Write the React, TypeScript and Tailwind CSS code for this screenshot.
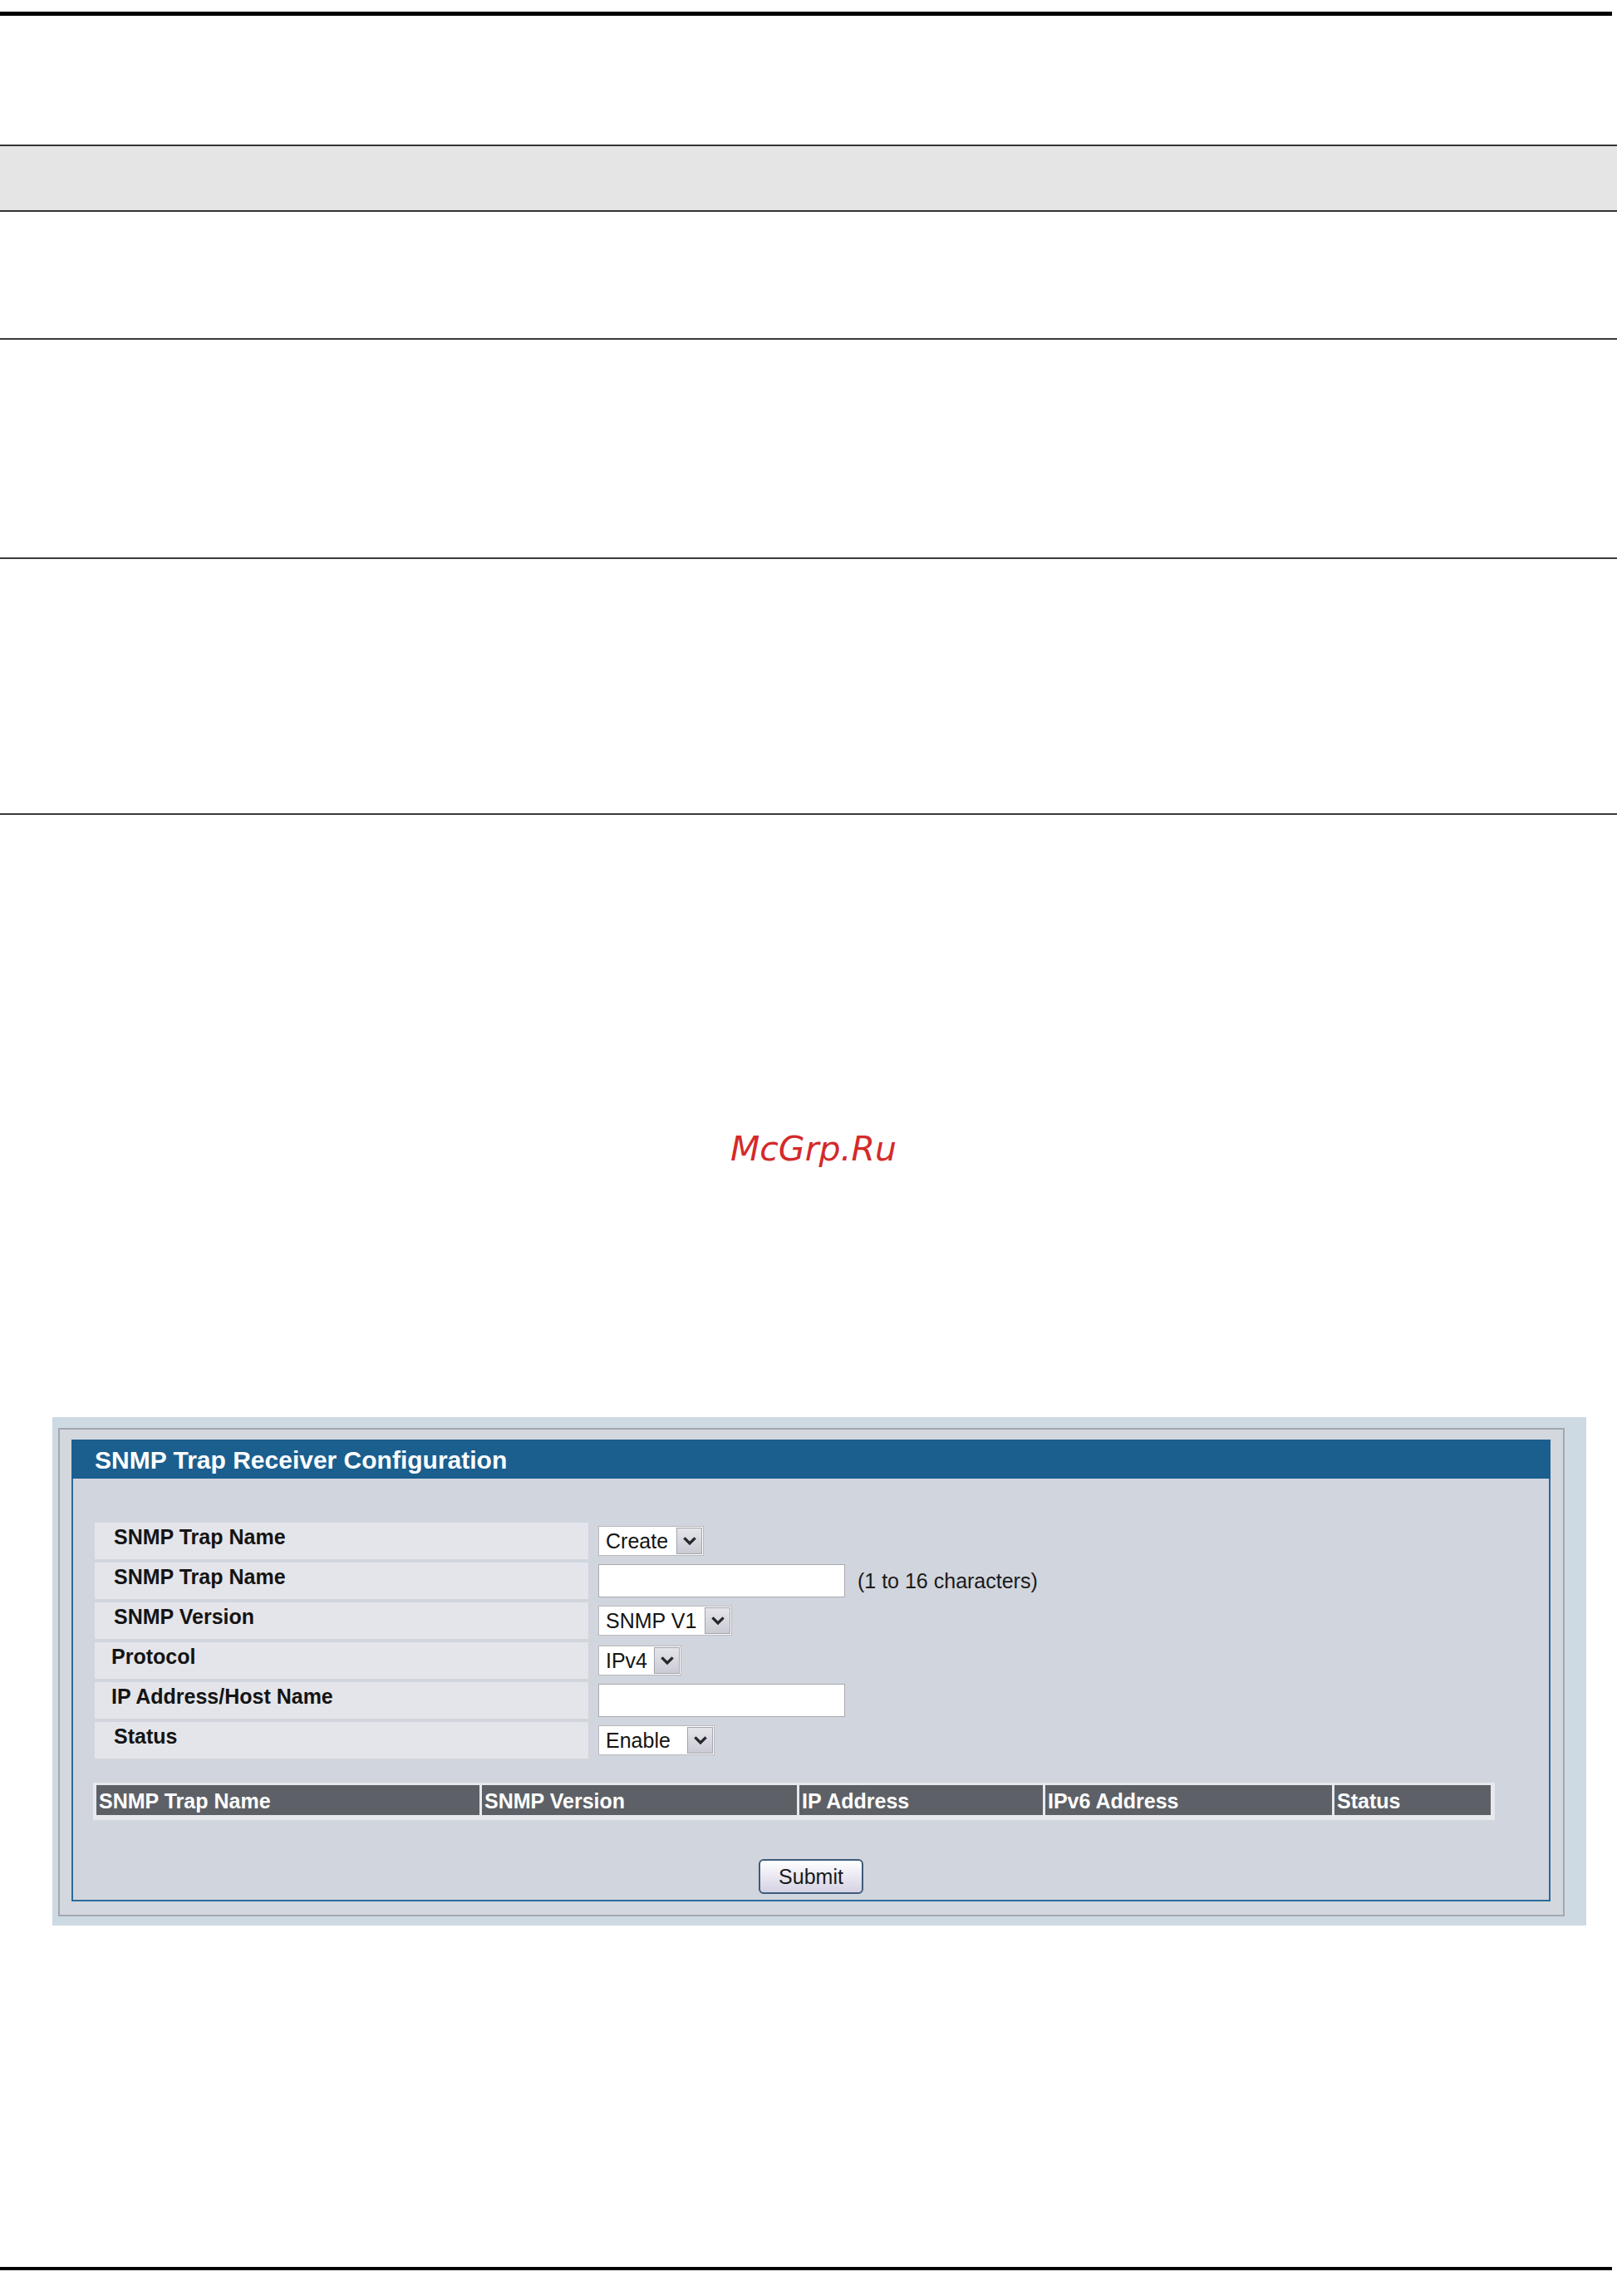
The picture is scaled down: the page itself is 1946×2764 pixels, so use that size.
import React from 'react';

const ARIAL = { fontFamily: '"Liberation Sans", Arial, sans-serif' };

interface SelectProps {
    value: string;
    widthClass: string;
}

const Chevron: React.FC = () => (
    <svg width="16" height="11" viewBox="0 0 16 11" fill="none">
        <path d="M2.5 2.5 L8 8 L13.5 2.5" stroke="#26262c" strokeWidth="3.2" strokeLinecap="square" />
    </svg>
);

const FakeSelect: React.FC<SelectProps> = ({ value, widthClass }) => (
    <div className={`${widthClass} h-[36px] flex bg-white border border-[#b9b9bd]`}>
        <span className="flex-1 pl-[8px] pt-[1px] text-[25px] leading-[33px] text-[#141414] whitespace-nowrap">{value}</span>
        <div className="w-[31px] my-[1px] mr-[1px] flex items-center justify-center bg-linear-to-b from-[#e4e4ea] to-[#cbcbd5] border border-[#a4a4ae]">
            <Chevron />
        </div>
    </div>
);

const TextBox: React.FC = () => <div className="w-[297px] h-[40px] bg-white border border-[#a9a9ad]" />;

interface Row {
    label: string;
    labelPad: string;
    control: React.ReactNode;
}

const ROWS: Row[] = [
    { label: 'SNMP Trap Name', labelPad: 'pl-[23px]', control: <FakeSelect value="Create" widthClass="w-[127px]" /> },
    {
        label: 'SNMP Trap Name',
        labelPad: 'pl-[23px]',
        control: (
            <div className="flex items-center gap-[15px]">
                <TextBox />
                <span className="text-[25px] text-[#1a1a1a]">(1 to 16 characters)</span>
            </div>
        ),
    },
    { label: 'SNMP Version', labelPad: 'pl-[23px]', control: <FakeSelect value="SNMP V1" widthClass="w-[161px]" /> },
    { label: 'Protocol', labelPad: 'pl-[20px]', control: <FakeSelect value="IPv4" widthClass="w-[100px]" /> },
    { label: 'IP Address/Host Name', labelPad: 'pl-[20px]', control: <TextBox /> },
    { label: 'Status', labelPad: 'pl-[23px]', control: <FakeSelect value="Enable" widthClass="w-[140px]" /> },
];

const COLUMNS = [
    { title: 'SNMP Trap Name', w: 'w-[461px]' },
    { title: 'SNMP Version', w: 'w-[379px]' },
    { title: 'IP Address', w: 'w-[293px]' },
    { title: 'IPv6 Address', w: 'w-[345px]' },
    { title: 'Status', w: 'w-[188px]' },
];

const TrapReceiverPanel: React.FC = () => (
    <div className="ml-[63px] w-[1846px] bg-[#cddae3] pt-[13px] pb-[11px] pl-[7px] leading-[1.15]" style={ARIAL}>
        <div className="w-[1813px] border-2 border-[#a3a7ad] bg-[#d3d7de] pt-[12px] pb-[16px] pl-[14px]">
            <div className="w-[1780px]">
                <div className="h-[47px] bg-[#1b5f8f] flex items-center pl-[28px] pt-[2px]">
                    <h2 className="text-[30px] font-bold text-white leading-none">SNMP Trap Receiver Configuration</h2>
                </div>
                <div className="bg-[#d1d5dd] border-x-2 border-b-2 border-[#2a6b9c] pt-[53px] pb-[7px]">
                    <div className="ml-[26px] flex flex-col gap-[4px]">
                        {ROWS.map((row, i) => (
                            <div key={i} className="flex items-center h-[44px]">
                                <div className={`w-[594px] h-[44px] bg-[#e4e5ea] ${row.labelPad} pt-[3px]`}>
                                    <span className="text-[25px] leading-[29px] font-bold text-[#141414]">{row.label}</span>
                                </div>
                                <div className="ml-[12px]">{row.control}</div>
                            </div>
                        ))}
                    </div>

                    <div className="ml-[24px] mt-[29px] w-[1687px] flex gap-[3px] bg-[#e7e9ed] pt-[3px] pb-[6px] px-[4px]">
                        {COLUMNS.map((c) => (
                            <div key={c.title} className={`${c.w} h-[36px] bg-[#5d6167] flex items-center pl-[3px] pt-[2px]`}>
                                <span className="text-[25px] font-bold text-white whitespace-nowrap">{c.title}</span>
                            </div>
                        ))}
                    </div>

                    <div className="flex justify-center mt-[47px]">
                        <button className="w-[126px] h-[42px] rounded-[6px] border-2 border-[#3f5c7b] bg-linear-to-b from-white to-[#d5d1e4] text-[25px] text-[#1a1a1a] flex items-center justify-center">
                            Submit
                        </button>
                    </div>
                </div>
            </div>
        </div>
    </div>
);

export default function App() {
    return (
        <div className="w-[1946px] min-h-[2764px] bg-white overflow-hidden">
            <div className="pt-[14px]">
                <div className="w-[1940px] h-[5px] bg-black" />
            </div>
            <div className="mt-[155px] h-[81px] bg-[#e5e5e5] border-y-2 border-[#333]" />
            <div className="mt-[152px] h-[2px] bg-[#3a3a3a]" />
            <div className="mt-[262px] h-[2px] bg-[#3a3a3a]" />
            <div className="mt-[306px] h-[2px] bg-[#3a3a3a]" />

            <div className="mt-[382px] h-[40px] flex justify-center pl-[12px]">
                <span
                    className="text-[41px] leading-[40px] italic text-[#d42a2a]"
                    style={{ fontFamily: '"DejaVu Sans", sans-serif' }}
                >
                    McGrp.Ru
                </span>
            </div>

            <div className="mt-[303px]">
                <TrapReceiverPanel />
            </div>

            <div className="mt-[411px] w-[1940px] h-[4px] bg-black" />
        </div>
    );
}
